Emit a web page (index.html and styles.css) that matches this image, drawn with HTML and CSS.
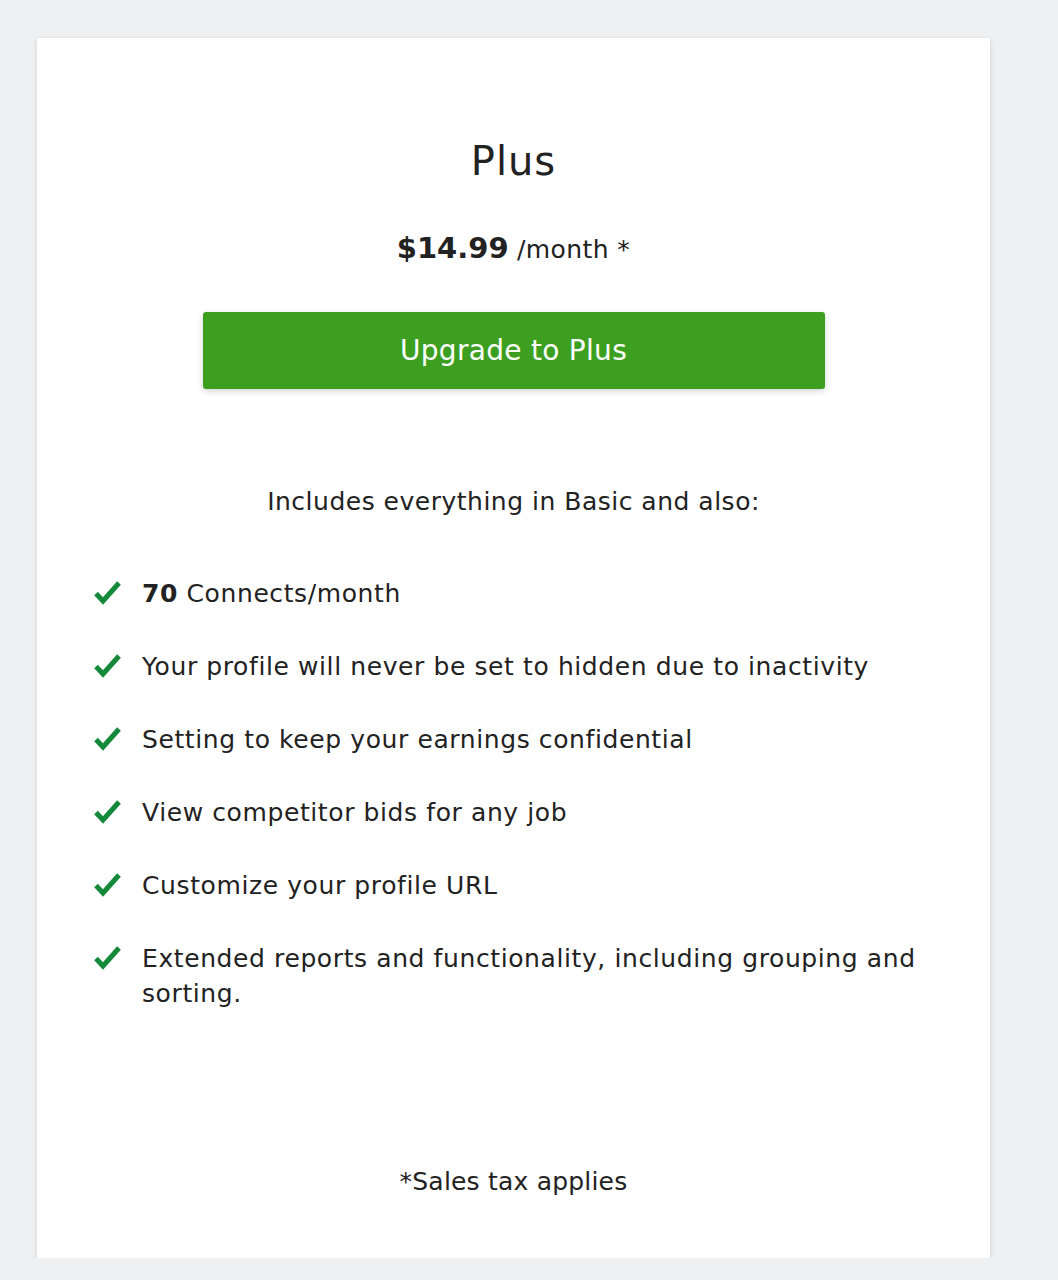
FILE: index.html
```html
<!DOCTYPE html>
<html lang="en">
<head>
  <meta charset="UTF-8" />
  <title>Plus plan</title>
  <link rel="stylesheet" href="styles.css">
</head>
<body>
  <div class="plan-card">
    <h1 class="plan-title">Plus</h1>
    <p class="plan-price"><strong>$14.99</strong> /month *</p>
    <button class="upgrade-btn">Upgrade to Plus</button>

    <p class="plan-intro">Includes everything in Basic and also:</p>

    <ul class="features">
      <li><svg class="check" viewBox="0 0 28 26"><path d="M2 13.5 L9 21 L25 3"/></svg><span><b>70</b> Connects/month</span></li>
      <li><svg class="check" viewBox="0 0 28 26"><path d="M2 13.5 L9 21 L25 3"/></svg><span>Your profile will never be set to hidden due to inactivity</span></li>
      <li><svg class="check" viewBox="0 0 28 26"><path d="M2 13.5 L9 21 L25 3"/></svg><span>Setting to keep your earnings confidential</span></li>
      <li><svg class="check" viewBox="0 0 28 26"><path d="M2 13.5 L9 21 L25 3"/></svg><span>View competitor bids for any job</span></li>
      <li><svg class="check" viewBox="0 0 28 26"><path d="M2 13.5 L9 21 L25 3"/></svg><span>Customize your profile URL</span></li>
      <li><svg class="check" viewBox="0 0 28 26"><path d="M2 13.5 L9 21 L25 3"/></svg><span>Extended reports and functionality, including grouping and sorting.</span></li>
    </ul>

    <p class="tax-note">*Sales tax applies</p>
  </div>
</body>
</html>
```

FILE: styles.css
```css
body {
  margin: 0;
  background: #eff0f2;
  font-family: "DejaVu Sans", Arial, sans-serif;
  color: #222;
}
.plan-card {
  box-sizing: border-box;
  width: 953px;
  height: 1220px;
  margin: 38px 0 0 37px;
  background: #fff;
  box-shadow: 0 2px 6px rgba(0, 0, 0, 0.12), 0 0 1px rgba(0, 0, 0, 0.1);
  padding: 98px 0 0;
  display: flex;
  flex-direction: column;
  align-items: center;
}
.plan-title {
  margin: 0;
  font-size: 40px;
  font-weight: 400;
  line-height: 50px;
  letter-spacing: 1px;
}
.plan-price {
  margin: 45px 0 0;
  font-size: 25px;
  line-height: 34px;
  letter-spacing: 0.4px;
}
.plan-price strong {
  font-size: 29px;
  font-weight: 700;
  letter-spacing: 0;
}
.upgrade-btn {
  margin-top: 45px;
  width: 622px;
  height: 77px;
  border: none;
  border-radius: 3px;
  background: #3c9f1f;
  color: #fff;
  font-family: inherit;
  font-size: 28px;
  letter-spacing: 0.3px;
  box-shadow: 0 2px 6px rgba(0, 0, 0, 0.18);
}
.plan-intro {
  margin: 96px 0 0;
  font-size: 25px;
  line-height: 34px;
  letter-spacing: 0.5px;
}
.features {
  list-style: none;
  margin: 57px 0 0;
  padding: 0 40px 0 57px;
  align-self: stretch;
  display: flex;
  flex-direction: column;
  gap: 38px;
}
.features li {
  display: flex;
  align-items: flex-start;
  gap: 20px;
  font-size: 25px;
  line-height: 35px;
  letter-spacing: 0.6px;
}
.features b {
  font-weight: 700;
}
.check {
  flex: none;
  width: 28px;
  height: 26px;
  margin-top: 4px;
  fill: none;
  stroke: #15893a;
  stroke-width: 5;
  stroke-linejoin: miter;
}
.tax-note {
  margin: auto 0 59px;
  font-size: 25px;
  line-height: 34px;
  letter-spacing: 0.2px;
}
```
